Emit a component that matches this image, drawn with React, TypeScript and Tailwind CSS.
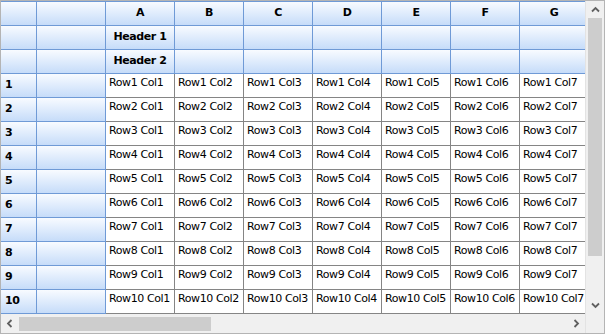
import React from "react";

const COLS = ["A", "B", "C", "D", "E", "F", "G"];
const ROWS = Array.from({ length: 10 }, (_, i) => i + 1);

const headBg = "bg-gradient-to-b from-[#f8fbff] to-[#c6dcf9]";
const font = { fontFamily: '"DejaVu Sans", Tahoma, sans-serif' };

function Chevron({ dir }: { dir: "up" | "down" | "left" | "right" }) {
  const rot = { up: 0, right: 90, down: 180, left: 270 }[dir];
  return (
    <svg width="9" height="9" viewBox="0 0 9 9" style={{ transform: `rotate(${rot}deg)` }}>
      <path d="M1 6.5 L4.5 3 L8 6.5" fill="none" stroke="#606060" strokeWidth="1.8" />
    </svg>
  );
}

function HeaderRow({ label, bold }: { label: (c: string, i: number) => string; bold?: boolean }) {
  return (
    <div className="flex h-[24px] shrink-0">
      <div className={`w-[36px] shrink-0 border-r border-b border-[#6f9ad6] ${headBg}`} />
      <div className={`w-[69px] shrink-0 border-r border-b border-[#6f9ad6] ${headBg}`} />
      {COLS.map((c, i) => (
        <div
          key={c}
          className={`w-[69px] shrink-0 border-r border-b border-[#6f9ad6] ${headBg} flex items-center justify-center text-[11px] tracking-[-0.4px] text-black ${bold ? "font-bold" : ""}`}
        >
          {label(c, i)}
        </div>
      ))}
    </div>
  );
}

function DataRow({ r }: { r: number }) {
  return (
    <div className="flex h-[24px] shrink-0">
      <div
        className={`w-[36px] shrink-0 border-r border-b border-[#6f9ad6] ${headBg} flex items-center pl-[4px] text-[11px] font-bold tracking-[-0.4px] text-black`}
      >
        {r}
      </div>
      <div className={`w-[69px] shrink-0 border-r border-b border-[#6f9ad6] ${headBg}`} />
      {COLS.map((c, i) => (
        <div
          key={c}
          className="w-[69px] shrink-0 border-r border-b border-[#858585] bg-white pl-[3px] pt-[2px] text-[11px] leading-[14px] tracking-[-0.4px] text-black whitespace-nowrap overflow-hidden"
        >
          Row{r} Col{i + 1}
        </div>
      ))}
    </div>
  );
}

export default function App() {
  return (
    <div
      className="w-[605px] h-[334px] border border-[#b4b4b4] bg-[#f0f0f0] flex overflow-hidden"
      style={font}
    >
      <div className="flex flex-col w-[584px] shrink-0">
        <div className="h-[313px] shrink-0 overflow-hidden flex flex-col border-t border-[#6f9ad6]">
          <HeaderRow label={(c) => c} bold />
          <HeaderRow label={(_, i) => (i === 0 ? "Header 1" : "")} bold />
          <HeaderRow label={(_, i) => (i === 0 ? "Header 2" : "")} bold />
          {ROWS.map((r) => (
            <DataRow key={r} r={r} />
          ))}
        </div>
        <div className="h-[18px] shrink-0 flex items-center bg-[#f0f0f0] pt-[1px]">
          <div className="w-[17px] h-full flex items-center justify-center">
            <Chevron dir="left" />
          </div>
          <div className="h-[14px] w-[192px] ml-[1px] bg-[#cdcdcd]" />
          <div className="flex-1" />
          <div className="w-[17px] h-full flex items-center justify-center">
            <Chevron dir="right" />
          </div>
        </div>
      </div>
      <div className="flex flex-col w-[19px] shrink-0 bg-[#f0f0f0] border-l border-[#e3e3e3]">
        <div className="h-[17px] flex items-center justify-center">
          <Chevron dir="up" />
        </div>
        <div className="mx-auto w-[14px] h-[238px] bg-[#cdcdcd]" />
        <div className="flex-1" />
        <div className="h-[17px] flex items-center justify-center mb-[19px]">
          <Chevron dir="down" />
        </div>
      </div>
    </div>
  );
}
